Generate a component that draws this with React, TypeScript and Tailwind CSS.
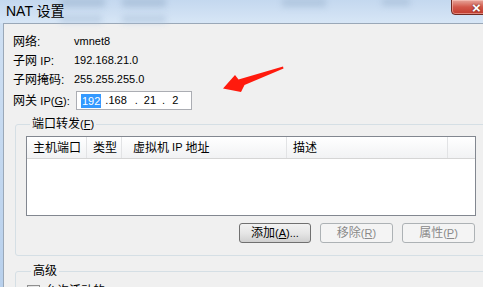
import React from "react";

const L = ({ children }: { children: React.ReactNode }) => (
  <span className="text-[11px]">{children}</span>
);

export default function App() {
  return (
    <div
      className="relative w-[483px] h-[287px] overflow-hidden bg-[#cfe0f3] text-[12px] text-black"
      style={{ fontFamily: '"Liberation Sans", "Noto Sans CJK SC", sans-serif' }}
    >
      {/* title bar */}
      <div className="relative h-[23px] bg-gradient-to-b from-[#c4d8ef] to-[#d7e6f6]">
        <div className="absolute left-[60px] top-[-2px] w-[45px] h-[9px] bg-[#9db5d0] blur-[3px] opacity-60" />
        <div className="absolute left-[122px] top-[-2px] w-[44px] h-[9px] bg-[#9db5d0] blur-[3px] opacity-60" />
        <div className="absolute left-[282px] top-[-2px] w-[44px] h-[9px] bg-[#9db5d0] blur-[3px] opacity-50" />
        <div className="absolute left-[382px] top-[-2px] w-[28px] h-[8px] bg-[#9db5d0] blur-[3px] opacity-50" />
        <div className="absolute left-[60px] top-[15px] w-[42px] h-[8px] bg-[#a9bfd8] blur-[3px] opacity-50" />
        <div className="absolute left-[122px] top-[15px] w-[44px] h-[8px] bg-[#a9bfd8] blur-[3px] opacity-50" />
        <div className="relative pl-[6px] pt-[2px] text-[14px] leading-[18px] text-black">
          NAT 设置
        </div>
        <div className="absolute left-[451px] top-[-1px] w-[45px] h-[16px] rounded-bl-[4px] border border-[#6e2a22] bg-gradient-to-b from-[#e5a59b] via-[#d2574a] to-[#c23b2e] shadow-[inset_0_0_0_1px_rgba(255,210,200,0.5)]">
          <span
            className="absolute left-[20px] top-[-3px] text-[15px] font-bold text-white"
            style={{ textShadow: "0 0 2px #4a1a14" }}
          >
            ×
          </span>
        </div>
      </div>

      <div className="flex h-[264px]">
        <div className="w-[3px] shrink-0 bg-gradient-to-b from-[#cfe0f3] to-[#b8d0ec]" />
        <div className="min-w-0 flex-1 overflow-hidden bg-[#f0f0f0] border-l border-t border-[#9aa8b8] pt-[8px]">
          <div className="pl-[9px]">
            <div className="flex h-[19px] items-center">
              <div className="w-[61px]">网络:</div>
              <L>vmnet8</L>
            </div>
            <div className="flex h-[19px] items-center">
              <div className="w-[61px]">
                子网 <L>IP</L>:
              </div>
              <L>192.168.21.0</L>
            </div>
            <div className="flex h-[19px] items-center">
              <div className="w-[61px]">子网掩码:</div>
              <L>255.255.255.0</L>
            </div>
            <div className="mt-[2px] flex h-[19px] items-center">
              <div className="w-[63px]">
                网关 <L>IP(<span className="underline">G</span>):</L>
              </div>
              <div className="flex h-[19px] w-[116px] items-center border border-[#abadb3] bg-white pl-[4px] text-[11px]">
                <span className="bg-[#3399ff] px-[1px] text-white leading-[14px]">192</span>
                <span className="ml-[4px]">.168</span>
                <span className="ml-[8px]">.</span>
                <span className="ml-[6px]">21</span>
                <span className="ml-[6px]">.</span>
                <span className="ml-[7px]">2</span>
              </div>
            </div>
          </div>

          <fieldset className="ml-[11px] mt-[6px] w-[490px] rounded-[3px] border border-[#d5dfe5] pl-[10px] pb-[12px]">
            <legend className="ml-[4px] px-[2px] leading-[16px]">
              端口转发<L>(<span className="underline">F</span>)</L>
            </legend>
            <div className="mt-[4px] h-[80px] w-[450px] border border-[#828790] bg-white">
              <div className="flex h-[22px] border-b border-[#d5d5d5] bg-gradient-to-b from-[#ffffff] to-[#f1f2f4]">
                <div className="flex w-[60px] items-center border-r border-[#e2e3e5] pl-[6px]">主机端口</div>
                <div className="flex w-[35px] items-center border-r border-[#e2e3e5] pl-[6px]">类型</div>
                <div className="flex w-[165px] items-center border-r border-[#e2e3e5] pl-[11px]">
                  虚拟机 <L>&nbsp;IP&nbsp;</L> 地址
                </div>
                <div className="flex w-[161px] items-center border-r border-[#e2e3e5] pl-[6px]">描述</div>
                <div className="flex-1" />
              </div>
            </div>
            <div className="mt-[7px] flex w-[450px] justify-end gap-[9px] pr-[1px]">
              <div className="flex h-[20px] w-[72px] items-center justify-center rounded-[3px] border border-[#707070] bg-gradient-to-b from-[#f2f2f2] via-[#e6e6e6] to-[#d0d0d0]">
                添加<L>(<span className="underline">A</span>)...</L>
              </div>
              <div className="flex h-[20px] w-[73px] items-center justify-center rounded-[3px] border border-[#adb2b5] bg-[#f4f4f4] text-[#8a8a8a]">
                移除<L>(<span className="underline">R</span>)</L>
              </div>
              <div className="flex h-[20px] w-[73px] items-center justify-center rounded-[3px] border border-[#adb2b5] bg-[#f4f4f4] text-[#8a8a8a]">
                属性<L>(<span className="underline">P</span>)</L>
              </div>
            </div>
          </fieldset>

          <fieldset className="ml-[11px] mt-[7px] w-[490px] rounded-[3px] border border-[#d5dfe5] pl-[11px] pb-[12px]">
            <legend className="ml-[4px] px-[2px] leading-[16px]">高级</legend>
            <div className="mt-[3px] flex items-center gap-[5px]">
              <div className="h-[13px] w-[13px] border border-[#8f8f8f] bg-gradient-to-br from-[#dcdcdc] to-[#ffffff] p-[2px]">
                <div className="h-full w-full bg-gradient-to-br from-[#aeb9c8] to-[#e8edf2]" />
              </div>
              <span>
                允许活动的 <L>FTP(<span className="underline">T</span>)</L>
              </span>
            </div>
          </fieldset>
        </div>
      </div>

      {/* red annotation arrow */}
      <svg
        className="absolute left-[220px] top-[64px]"
        width="66"
        height="30"
        viewBox="220 64 66 30"
      >
        <polygon
          points="283,66.5 283.5,68.5 244.5,85 241,92 223,88.5 235,75 238.5,79.5"
          fill="#ff1a0d"
        />
      </svg>
    </div>
  );
}
